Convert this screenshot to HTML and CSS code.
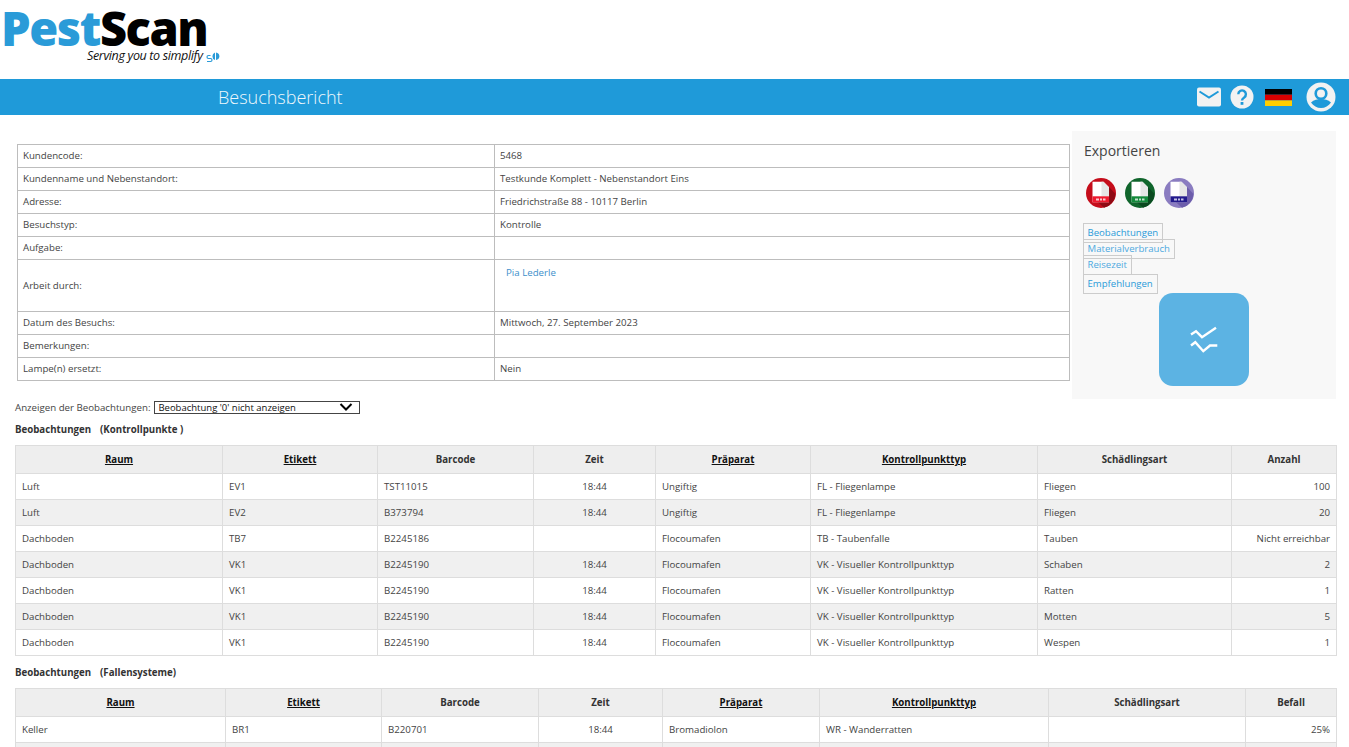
FILE: index.html
```html
<!DOCTYPE html>
<html lang="de">
<head>
<meta charset="utf-8">
<title>Besuchsbericht</title>
<link rel="stylesheet" href="styles.css">
</head>
<body>
<header class="logo-bar">
  <div class="logo">
    <div class="logo-word"><span class="logo-pest">Pest</span><span class="logo-scan">Scan</span></div>
    <div class="logo-tag">Serving you to simplify</div>
    <svg class="logo-mark" viewBox="0 0 15 11" width="15" height="11"><path d="M4.500 3.500H2.500a1.500 1.500 0 0 0 0 3h2a1.500 1.500 0 0 1 0 3H1" fill="none" stroke="#2a9bd8" stroke-width="1.200"/><path d="M9 0.500a4 4 0 0 0 0 7.500z" fill="#2a9bd8"/><path d="M10 .5a4 3.800 0 0 1 0 7.500z" fill="#2a9bd8"/></svg>
  </div>
</header>
<nav class="title-bar">
  <h1 class="page-title">Besuchsbericht</h1>
  <div class="nav-icons">
    <svg class="icon-mail" viewBox="0 0 24 20" width="24" height="20"><rect width="24" height="19" y=".5" rx="2" fill="#f2f2f2"/><path d="M2.500 4.500 12 10.500l9.500-6" fill="none" stroke="#1f9ad9" stroke-width="2"/></svg>
    <svg class="icon-help" viewBox="0 0 24 24" width="24" height="24"><circle cx="12" cy="12" r="11.500" fill="#f2f2f2"/><path d="M8.300 9.300a3.800 3.800 0 1 1 5.900 3.100c-1.500 1-2.200 1.600-2.200 3.200" fill="none" stroke="#1f9ad9" stroke-width="2.400"/><rect x="10.600" y="17" width="2.800" height="2.800" fill="#1f9ad9"/></svg>
    <svg class="icon-flag" viewBox="0 0 27 17" width="27" height="17"><rect width="27" height="5.700" fill="#000"/><rect y="5.700" width="27" height="5.700" fill="#d80000"/><rect y="11.400" width="27" height="5.600" fill="#ffce00"/></svg>
    <svg class="icon-user" viewBox="0 0 30 30" width="30" height="30"><circle cx="15" cy="15" r="14.500" fill="#f2f2f2"/><circle cx="15" cy="11.500" r="5.300" fill="none" stroke="#1f9ad9" stroke-width="2.600"/><path d="M5 20.500c3-2.600 6.500-3.500 10-3.500s7 .9 10 3.500c-2.300 3.500-6 5.500-10 5.500s-7.700-2-10-5.500z" fill="#1f9ad9"/></svg>
  </div>
</nav>
<main class="content">
  <section class="top-row">
    <table class="info-table">
      <colgroup><col class="info-label"><col></colgroup>
      <tr><td>Kundencode:</td><td>5468</td></tr>
      <tr><td>Kundenname und Nebenstandort:</td><td>Testkunde Komplett - Nebenstandort Eins</td></tr>
      <tr><td>Adresse:</td><td>Friedrichstraße 88 - 10117 Berlin</td></tr>
      <tr><td>Besuchstyp:</td><td>Kontrolle</td></tr>
      <tr><td>Aufgabe:</td><td></td></tr>
      <tr class="tall-row"><td>Arbeit durch:</td><td class="worker-cell"><a class="worker">Pia Lederle</a></td></tr>
      <tr><td>Datum des Besuchs:</td><td>Mittwoch, 27. September 2023</td></tr>
      <tr><td>Bemerkungen:</td><td></td></tr>
      <tr><td>Lampe(n) ersetzt:</td><td>Nein</td></tr>
    </table>
    <aside class="export-panel">
      <h2 class="export-title">Exportieren</h2>
      <div class="export-icons">
        <svg class="file-icon" viewBox="0 0 30 30" width="30" height="30"><circle cx="15" cy="15" r="15" fill="#c50d1b"/><path d="M23 9 29.500 16A15 15 0 0 1 18 29.700L12 24.300z" fill="#8f0a14"/><path d="M6.500 3.700H17.500L23 9.200V24.300H6.500z" fill="#fff"/><path d="M15.500 3.700h2L23 9.200V18.500h-7.500z" fill="#e6e6e6"/><rect x="6.500" y="18.300" width="16.500" height="6" fill="#ee1b30"/><path d="M10 20.500h3v2h-3zM14 20.500h2v2h-2zM17 20.500h2.500v2H17z" fill="#f9ccd1"/></svg>
        <svg class="file-icon" viewBox="0 0 30 30" width="30" height="30"><circle cx="15" cy="15" r="15" fill="#10652c"/><path d="M23 9 29.500 16A15 15 0 0 1 18 29.700L12 24.300z" fill="#0b4a20"/><path d="M6.500 3.700H17.500L23 9.200V24.300H6.500z" fill="#fff"/><path d="M15.500 3.700h2L23 9.200V18.500h-7.500z" fill="#e6e6e6"/><rect x="6.500" y="18.300" width="16.500" height="6" fill="#148a3c"/><path d="M10 20.500h3v2h-3zM14 20.500h2v2h-2zM17 20.500h2.500v2H17z" fill="#c4e2ce"/></svg>
        <svg class="file-icon" viewBox="0 0 30 30" width="30" height="30"><circle cx="15" cy="15" r="15" fill="#8a7cc0"/><path d="M23 9 29.500 16A15 15 0 0 1 18 29.700L12 24.300z" fill="#6c5dab"/><path d="M6.500 3.700H17.500L23 9.200V24.300H6.500z" fill="#fff"/><path d="M15.500 3.700h2L23 9.200V18.500h-7.500z" fill="#e6e6e6"/><rect x="6.500" y="18.300" width="16.500" height="6" fill="#231a8c"/><path d="M10 20.500h3v2h-3zM14 20.500h2v2h-2zM17 20.500h2.500v2H17z" fill="#c4c1e4"/></svg>
      </div>
      <div class="export-links">
        <a class="tab tab-a">Beobachtungen</a>
        <a class="tab tab-b">Materialverbrauch</a>
        <a class="tab tab-c">Reisezeit</a>
        <a class="tab tab-d">Empfehlungen</a>
      </div>
      <div class="chart-button">
        <svg viewBox="0 0 30 28" width="30" height="28"><path d="M2 8.500 7 5.200l6 6L27 1.800M2 19.500l4.300-3.300 8 9 6.700-5.700h7.300" fill="none" stroke="#fff" stroke-width="2.400"/></svg>
      </div>
    </aside>
  </section>
  <div class="filter-row">
    <label class="filter-label" for="filter">Anzeigen der Beobachtungen:</label>
    <div class="select-box" id="filter"><span>Beobachtung '0' nicht anzeigen</span><svg viewBox="0 0 14 8" width="14" height="8"><path d="M1.500 1 7 6.500 12.500 1" fill="none" stroke="#000" stroke-width="2"/></svg></div>
  </div>
  <h3 class="section-title"><span class="section-name">Beobachtungen</span>(Kontrollpunkte )</h3>
  <table class="data-table">
    <colgroup><col class="a1"><col class="a2"><col class="a3"><col class="a4"><col class="a5"><col class="a6"><col class="a7"><col class="a8"></colgroup>
    <thead><tr><th><u>Raum</u></th><th><u>Etikett</u></th><th>Barcode</th><th>Zeit</th><th><u>Präparat</u></th><th><u>Kontrollpunkttyp</u></th><th>Schädlingsart</th><th>Anzahl</th></tr></thead>
    <tbody>
      <tr><td>Luft</td><td>EV1</td><td>TST11015</td><td class="num">18:44</td><td>Ungiftig</td><td>FL - Fliegenlampe</td><td>Fliegen</td><td class="right">100</td></tr>
      <tr><td>Luft</td><td>EV2</td><td>B373794</td><td class="num">18:44</td><td>Ungiftig</td><td>FL - Fliegenlampe</td><td>Fliegen</td><td class="right">20</td></tr>
      <tr><td>Dachboden</td><td>TB7</td><td>B2245186</td><td class="num"></td><td>Flocoumafen</td><td>TB - Taubenfalle</td><td>Tauben</td><td class="right">Nicht erreichbar</td></tr>
      <tr><td>Dachboden</td><td>VK1</td><td>B2245190</td><td class="num">18:44</td><td>Flocoumafen</td><td>VK - Visueller Kontrollpunkttyp</td><td>Schaben</td><td class="right">2</td></tr>
      <tr><td>Dachboden</td><td>VK1</td><td>B2245190</td><td class="num">18:44</td><td>Flocoumafen</td><td>VK - Visueller Kontrollpunkttyp</td><td>Ratten</td><td class="right">1</td></tr>
      <tr><td>Dachboden</td><td>VK1</td><td>B2245190</td><td class="num">18:44</td><td>Flocoumafen</td><td>VK - Visueller Kontrollpunkttyp</td><td>Motten</td><td class="right">5</td></tr>
      <tr><td>Dachboden</td><td>VK1</td><td>B2245190</td><td class="num">18:44</td><td>Flocoumafen</td><td>VK - Visueller Kontrollpunkttyp</td><td>Wespen</td><td class="right">1</td></tr>
    </tbody>
  </table>
  <h3 class="section-title section-two"><span class="section-name">Beobachtungen</span>(Fallensysteme)</h3>
  <table class="data-table">
    <colgroup><col class="b1"><col class="b2"><col class="b3"><col class="b4"><col class="b5"><col class="b6"><col class="b7"><col class="b8"></colgroup>
    <thead><tr><th><u>Raum</u></th><th><u>Etikett</u></th><th>Barcode</th><th>Zeit</th><th><u>Präparat</u></th><th><u>Kontrollpunkttyp</u></th><th>Schädlingsart</th><th>Befall</th></tr></thead>
    <tbody>
      <tr><td>Keller</td><td>BR1</td><td>B220701</td><td class="num">18:44</td><td>Bromadiolon</td><td>WR - Wanderratten</td><td></td><td class="right">25%</td></tr>
      <tr><td>&nbsp;</td><td></td><td></td><td></td><td></td><td></td><td></td><td></td></tr>
    </tbody>
  </table>
</main>
</body>
</html>
```
FILE: styles.css
```css
* { box-sizing: border-box; }
html, body { margin: 0; padding: 0; height: 747px; overflow: hidden; background: #fff; }
body { font-family: "Open Sans", sans-serif; font-size: 9.7px; color: #444; }

.logo-bar { height: 79px; padding: 3px 0 0 1px; }
.logo { position: relative; width: 222px; height: 66px; }
.logo-word { font-size: 47px; line-height: 51px; font-weight: 800; letter-spacing: -1.450px; white-space: nowrap; }
.logo-pest { color: #2a9bd8; }
.logo-scan { color: #000; }
.logo-tag { position: absolute; left: 86px; top: 45px; font-size: 12.5px; line-height: 16px; font-style: italic; color: #111; letter-spacing: -.35px; white-space: nowrap; }
.logo-mark { position: absolute; left: 205px; top: 49px; }

.title-bar { height: 36px; background: #1f9ad9; display: flex; align-items: center; justify-content: space-between; padding: 0 13px 0 218px; }
.page-title { margin: 0; font-size: 18px; font-weight: 300; color: #eef7fc; }
.nav-icons { display: flex; align-items: center; }
.icon-mail { margin-right: 9px; }
.icon-help { margin-right: 11px; }
.icon-flag { margin-right: 14px; }

.content { padding: 16px 12px 0 15px; }
.top-row { display: flex; align-items: flex-start; }
.info-table { width: 1053px; height: 237px; margin: 13px 2px 0 2px; border-collapse: collapse; table-layout: fixed; }
.info-label { width: 477px; }
.info-table td { height: 23px; padding: 0 5px 2px; border: 1px solid #bdbdbd; color: #444; }
.info-table .tall-row td { height: 52px; padding-bottom: 0; }
.info-table .worker-cell { vertical-align: top; padding: 6px 0 0 11px; }
.worker { color: #3d8fcb; }

.export-panel { position: relative; width: 264px; height: 268px; background: #f8f8f8; padding: 10px 12px; flex: none; }
.export-title { margin: 0; font-size: 14px; line-height: 19px; font-weight: 400; color: #444; }
.export-icons { display: flex; gap: 9px; margin: 18px 0 0 2px; }
.export-links { display: flex; flex-direction: column; align-items: flex-start; margin-top: 15px; font-size: 9.6px; }
.tab { display: block; padding: 0 4px 0 3.500px; border: 1px solid #ccc; color: #2a9bd8; line-height: 17px; margin-left: -1px; }
.tab-a { height: 20px; }
.tab-b { height: 20px; margin-top: -4px; color: #4ea9e0; }
.tab-c { height: 20px; margin-top: -4px; color: #4ea9e0; margin-bottom: 0; }
.tab-d { height: 20px; margin-top: -1px; }
.chart-button { position: absolute; left: 87px; top: 162px; width: 90px; height: 93px; border-radius: 14px; background: #5cb3e3; display: flex; align-items: center; justify-content: center; }

.filter-row { display: flex; align-items: center; margin-top: 1px; height: 14px; }
.filter-label { margin-right: 4px; }
.select-box { width: 206px; height: 13px; border: 1px solid #444; display: flex; align-items: center; justify-content: space-between; padding: 0 6px 0 3px; color: #111; font-size: 9.5px; }
.section-title { margin: 9px 0 0; font-size: 9.7px; line-height: 14px; font-weight: 700; color: #333; }
.section-name { margin-right: 9px; }
.section-two { margin-top: 10px; }

.data-table { width: 1321px; margin-top: 8px; border-collapse: collapse; table-layout: fixed; }
.data-table th { height: 28px; padding: 0 6px; background: #eee; border: 1px solid #ddd; font-weight: 700; text-align: center; color: #333; }
.data-table u { color: #111; }
.data-table td { height: 26px; padding: 0 6px; border: 1px solid #ddd; color: #444; white-space: nowrap; }
.data-table tbody tr:nth-child(even) td { background: #f0f0f0; }
.data-table .num { text-align: center; }
.data-table .right { text-align: right; }

.a1 { width: 207px; } .a2 { width: 155px; } .a3 { width: 156px; } .a4 { width: 122px; }
.a5 { width: 155px; } .a6 { width: 227px; } .a7 { width: 194px; } .a8 { width: 105px; }
.b1 { width: 210px; } .b2 { width: 156px; } .b3 { width: 157px; } .b4 { width: 124px; }
.b5 { width: 157px; } .b6 { width: 229px; } .b7 { width: 197px; } .b8 { width: 91px; }
```
